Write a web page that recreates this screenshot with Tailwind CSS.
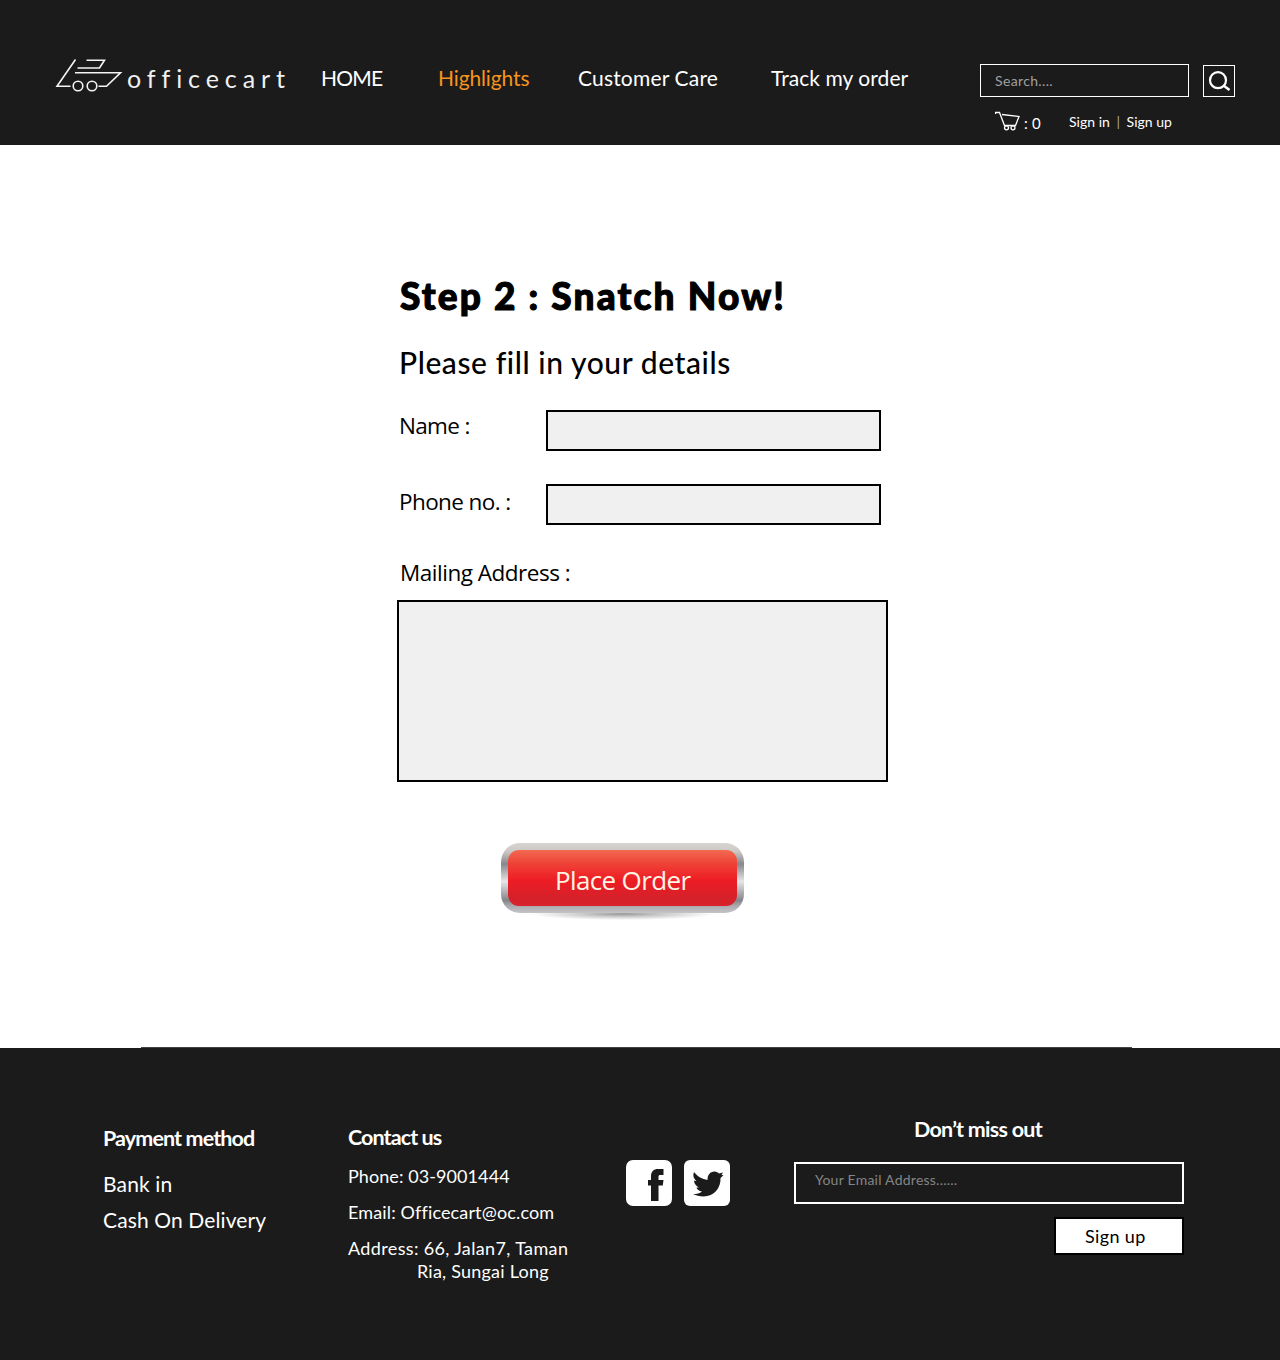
<!DOCTYPE html>
<html lang="en">
<head>
<meta charset="utf-8">
<title>officecart</title>
<script src="https://cdn.jsdelivr.net/npm/@tailwindcss/browser@4"></script>
</head>
<body class="w-[1280px] bg-white font-['Lato',sans-serif] leading-none text-black">
<header class="flex h-[145px] items-start bg-[#1b1b1b] pl-[55px] text-white">
  <a class="mt-[58px] flex w-[266px] items-start">
    <svg class="h-[34px] w-[68px] shrink-0" viewBox="0 0 68 34" fill="none" stroke="#f4f4f4" stroke-width="1.6">
      <path d="M20.500 1.500L2 28.300H15.500M31.500 2.200H49.500L44.500 10H22.500M20 14.800H65.500L51.500 28.300H43.500"/>
      <circle cx="23" cy="28" r="4.800"/><circle cx="37" cy="28" r="4.800"/>
    </svg>
    <span class="ml-1 mt-[8px] whitespace-nowrap text-[25px] tracking-[5.92px] text-[#f0f0f0]">officecart</span>
  </a>
  <nav class="mt-[67px] flex text-[21px] whitespace-nowrap">
    <a class="w-[117px] tracking-[-0.75px]">HOME</a>
    <a class="w-[140px] tracking-[-0.13px] text-[#f7941d]">Highlights</a>
    <a class="w-[193px] tracking-[0.18px]">Customer Care</a>
    <a class="w-[209px] tracking-[0.06px]">Track my order</a>
  </nav>
  <div class="mt-16 w-[255px]">
    <div class="flex items-start gap-[14px]">
      <div class="h-[33px] w-[209px] border border-white pl-[14px] pt-[9px] text-sm leading-none tracking-[0.36px] text-[#a0a0a0]">Search....</div>
      <button class="mt-px h-8 w-8 border border-white" aria-label="Search">
        <svg class="h-[30px] w-[30px]" viewBox="0 0 30 30" fill="none" stroke="#fff" stroke-width="2.200"><circle cx="14" cy="14.200" r="8"/><path d="M19.500 19.500L25.500 24" stroke-width="2.600"/></svg>
      </button>
    </div>
    <div class="mt-[14px] flex items-start pl-[15px] whitespace-nowrap">
      <svg class="h-[21px] w-[27px]" viewBox="0 0 27 21" fill="none" stroke="#fff" stroke-width="1.300"><path d="M.500 3V1.500H4.500L9.500 14.500H20.500L24 5.500L7 3.500"/><circle cx="11.500" cy="16.800" r="2"/><circle cx="18" cy="16.800" r="2"/></svg>
      <span class="ml-[2px] mt-[5px] w-[45px] text-[15px] tracking-[0.23px]">: 0</span>
      <span class="mt-1 text-sm leading-none tracking-[0.02px]">Sign in <span class="px-[3px] text-[#aaa]">|</span> Sign up</span>
    </div>
  </div>
</header>
<main class="flex h-[903px] flex-col whitespace-nowrap pl-[397px]">
  <h1 class="mt-[132px] pl-[3px] text-[37px] font-black tracking-[2.17px] [-webkit-text-stroke:1.1px_#000]">Step 2 : Snatch Now!</h1>
  <h2 class="mt-[33px] pl-0.5 text-[30px] font-medium tracking-[0.58px]">Please fill in your details</h2>
  <div class="mt-[33px] flex items-start font-['Open_Sans',sans-serif] text-[22.5px]">
    <label class="w-[149px] pl-0.5 pt-[5px] tracking-[-0.66px]">Name :</label>
    <div class="h-[41px] w-[335px] border-2 border-black bg-[#f0f0f0]"></div>
  </div>
  <div class="mt-[33px] flex items-start font-['Open_Sans',sans-serif] text-[22.5px]">
    <label class="w-[149px] pl-0.5 pt-[7px] tracking-[-0.6px]">Phone no. :</label>
    <div class="h-[41px] w-[335px] border-2 border-black bg-[#f0f0f0]"></div>
  </div>
  <label class="mt-[37px] pl-[3px] font-['Open_Sans',sans-serif] text-[22.5px] tracking-[-0.48px]">Mailing Address :</label>
  <div class="mt-[15px] h-[182px] w-[491px] border-2 border-black bg-[#f0f0f0]"></div>
  <div class="relative ml-[104px] mt-[61px] w-[243px]">
    <div class="absolute left-[30px] top-[65px] h-[12px] w-[183px] bg-[radial-gradient(closest-side,#999,#ccc_45%,transparent)]"></div>
    <button class="relative block h-[70px] w-[243px] rounded-[19px] bg-[linear-gradient(#d8d4d0,#ccc8c6_12%,#88888c_30%,#e6e6e8_55%,#858589_82%,#aaaab0_90%,#c4c4c8)] p-[7px]">
      <span class="block h-14 rounded-[11px] bg-[linear-gradient(#f26a50,#ef4136_25%,#ed1c24_55%,#d6212a_85%,#d9222a)] pl-[47px] pt-[17px] text-left font-['Open_Sans',sans-serif] text-[26px] leading-none tracking-[-0.64px] text-[#fff3e4]">Place Order</span>
    </button>
  </div>
</main>
<footer class="relative flex h-[312px] items-start whitespace-nowrap bg-[#1b1b1b] pl-[103px] text-white">
  <div class="absolute -top-px left-[141px] h-px w-[991px] bg-[#444]"></div>
  <section class="w-[245px] pt-[80px]">
    <h3 class="text-[21.5px] font-bold tracking-[-0.88px]">Payment method</h3>
    <p class="mt-[23px] text-[21px] tracking-[0.15px]">Bank in</p>
    <p class="mt-[15px] text-[21px] tracking-[0.12px]">Cash On Delivery</p>
  </section>
  <section class="w-[278px] pt-[79px] text-[18px]">
    <h3 class="text-[21.5px] font-bold tracking-[-0.9px]">Contact us</h3>
    <p class="mt-[18px] tracking-[0.08px]">Phone: 03-9001444</p>
    <p class="mt-[18px] tracking-[0.14px]">Email: Officecart@oc.com</p>
    <p class="mt-[18px] tracking-[0.36px]">Address: 66, Jalan7, Taman</p>
    <p class="mt-[5px] pl-[69px] tracking-[0.22px]">Ria, Sungai Long</p>
  </section>
  <div class="mt-28 flex w-[168px] gap-3">
    <svg class="h-[46px] w-[46px]" viewBox="0 0 46 46"><rect width="46" height="46" rx="7" fill="#fff"/><path fill="#1b1b1b" d="M25 41V25.500H22V20H25V16.500C25 11.500 27.500 9 32 9H37.500V15H34.500C33 15 32.500 15.600 32.500 17V20H37.500L36.800 25.500H32.500V41Z"/></svg>
    <svg class="h-[46px] w-[46px]" viewBox="0 0 46 46"><rect width="46" height="46" rx="6" fill="#fff"/><path fill="#1b1b1b" d="M10 12C14 17 18 19 23.500 20C23.500 15 26 11.500 30.500 11.500C32.500 11.500 34 12.500 35 13.500L39 12.500L37.500 15L39.500 15.200L36.500 18C37 28 30 36.500 19.500 36.500C15.500 36.500 12 35.500 9 34C13 34 15.500 33.500 18 31.500C15 31 13 29.500 12.500 27.500H15C12 26 10 23.500 10 20.500L12.500 21.200C9.500 18.500 8.500 15.500 10 12Z"/></svg>
  </div>
  <section class="w-[390px] pt-[71px]">
    <h3 class="pl-[120px] text-[21.5px] font-bold tracking-[-0.75px]">Don’t miss out</h3>
    <div class="mt-[21px] h-[42px] border-2 border-white pl-[19px] pt-[9px] text-sm leading-none tracking-[0.24px] text-[#858585]">Your Email Address......</div>
    <button class="ml-auto mt-[13px] block h-[38px] w-[130px] border-2 border-black bg-white pl-[29px] text-left text-[18px] leading-none tracking-[0.35px] text-black">Sign up</button>
  </section>
</footer>
</body>
</html>
